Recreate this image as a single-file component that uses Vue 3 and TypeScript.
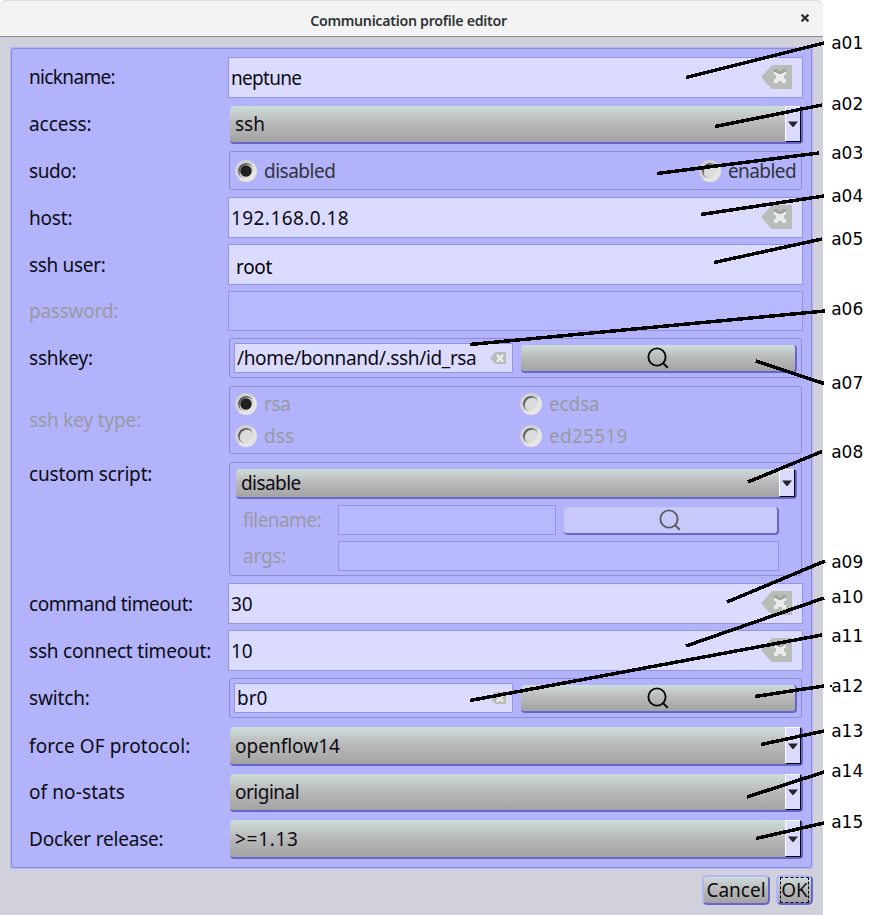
<script setup lang="ts">
interface Callout {
  label: string
  x1: number
  y1: number
  x2: number
  y2: number
  ty: number
}

interface Row {
  label: string
  kind: 'text' | 'combo' | 'sudo' | 'browse' | 'keytype' | 'script'
  value?: string
  cls?: string
  clear?: boolean
  disabled?: boolean
}

const rows: Row[] = [
  { label: 'nickname:', kind: 'text', value: 'neptune', cls: 'nickname', clear: true },
  { label: 'access:', kind: 'combo', value: 'ssh', cls: 'access' },
  { label: 'sudo:', kind: 'sudo', cls: 'sudo' },
  { label: 'host:', kind: 'text', value: '192.168.0.18', cls: 'host', clear: true },
  { label: 'ssh user:', kind: 'text', value: 'root', cls: 'user' },
  { label: 'password:', kind: 'text', value: '', cls: 'password', disabled: true },
  { label: 'sshkey:', kind: 'browse', value: '/home/bonnand/.ssh/id_rsa', cls: 'sshkey' },
  { label: 'ssh key type:', kind: 'keytype', cls: 'keytype', disabled: true },
  { label: 'custom script:', kind: 'script', cls: 'script' },
  { label: 'command timeout:', kind: 'text', value: '30', cls: 'timeout', clear: true },
  { label: 'ssh connect timeout:', kind: 'text', value: '10', cls: 'connect', clear: true },
  { label: 'switch:', kind: 'browse', value: 'br0', cls: 'switch' },
  { label: 'force OF protocol:', kind: 'combo', value: 'openflow14', cls: 'protocol' },
  { label: 'of no-stats', kind: 'combo', value: 'original', cls: 'nostats' },
  { label: 'Docker release:', kind: 'combo', value: '>=1.13', cls: 'docker' },
]

const keyTypes = ['rsa', 'ecdsa', 'dss', 'ed25519']

const callouts: Callout[] = [
  { label: 'a01', x1: 686, y1: 77.5, x2: 824, y2: 43, ty: 49 },
  { label: 'a02', x1: 715, y1: 126.5, x2: 822, y2: 105, ty: 110 },
  { label: 'a03', x1: 657, y1: 173.5, x2: 819, y2: 153, ty: 159 },
  { label: 'a04', x1: 701, y1: 214.5, x2: 824, y2: 196, ty: 202 },
  { label: 'a05', x1: 714, y1: 262.5, x2: 822, y2: 239, ty: 245 },
  { label: 'a06', x1: 470, y1: 344.5, x2: 825, y2: 311, ty: 315 },
  { label: 'a07', x1: 756, y1: 361, x2: 824, y2: 383.5, ty: 389 },
  { label: 'a08', x1: 748, y1: 482, x2: 822, y2: 451.5, ty: 458 },
  { label: 'a09', x1: 727, y1: 602, x2: 825, y2: 561, ty: 568 },
  { label: 'a10', x1: 686, y1: 646, x2: 824, y2: 598, ty: 603 },
  { label: 'a11', x1: 470, y1: 700.5, x2: 822, y2: 635, ty: 642 },
  { label: 'a12', x1: 755, y1: 696.5, x2: 824, y2: 686, ty: 692 },
  { label: 'a13', x1: 761, y1: 744.5, x2: 824, y2: 731, ty: 737 },
  { label: 'a14', x1: 747, y1: 797, x2: 824, y2: 772, ty: 777 },
  { label: 'a15', x1: 756, y1: 838.5, x2: 824, y2: 823, ty: 828 },
]

// Letter spacing, in pixels, that sets each caption at its own width.
const tracking: Record<string, number> = {
  'nickname:': -0.65,
  'access:': -0.05,
  'sudo:': -0.4,
  'host:': -0.2,
  'ssh user:': -0.33,
  'password:': -0.25,
  'sshkey:': -0.2,
  'ssh key type:': -0.15,
  'custom script:': -0.17,
  'command timeout:': -0.43,
  'ssh connect timeout:': -0.2,
  'switch:': -0.15,
  'force OF protocol:': 0.1,
  'of no-stats': 0.1,
  'Docker release:': -0.2,
  neptune: -0.7,
  disabled: -0.5,
  enabled: -0.57,
  '192.168.0.18': 0.42,
  root: -0.3,
  '/home/bonnand/.ssh/id_rsa': -0.36,
  disable: -0.57,
  'filename:': -0.57,
  'args:': -0.2,
  original: -0.5,
  '>=1.13': 0.7,
  ed25519: 0.28,
  ecdsa: -0.2,
  rsa: -0.4,
}

const track = (text = '') => ({ letterSpacing: `${tracking[text] ?? 0}px` })
</script>

<template>
  <div class="page">
    <div class="window">
      <header class="titlebar">
        <span class="title">Communication profile editor</span>
        <svg class="close" viewBox="0 0 10 10"><path d="M1.6 1.6 8.4 8.4M8.4 1.6 1.6 8.4" /></svg>
      </header>

      <main class="panel">
        <div class="frame">
          <div v-for="row in rows" :key="row.label" class="row" :class="row.cls">
            <label class="label" :class="{ dim: row.disabled }" :style="track(row.label)">{{ row.label }}</label>

            <div v-if="row.kind === 'text'" class="field" :class="{ off: row.disabled }">
              <span class="value" :style="track(row.value)">{{ row.value }}</span>
              <svg v-if="row.clear" class="clear" viewBox="0 0 32 24">
                <path class="tag" d="M1 12 12 0H32V24H12L6 18Z" />
                <path class="cross" d="M14 6h12v4h-2v4h2v4h-4v-2h-4v2h-4v-4h2v-4h-2z" />
                <path class="shade" d="M14 4h4v2h4V4h4v3h-2v1h-2v1h-4V8h-2V7h-2z" />
              </svg>
            </div>

            <div v-else-if="row.kind === 'combo'" class="combo">
              <span class="value" :style="track(row.value)">{{ row.value }}</span>
              <span class="drop"><svg viewBox="0 0 10 6"><path d="M0 .500H10L5.500 6h-1z" /></svg></span>
            </div>

            <div v-else-if="row.kind === 'sudo'" class="group choices">
              <span class="option"><i class="radio on"></i><span :style="track('disabled')">disabled</span></span>
              <span class="option"><i class="radio"></i><span :style="track('enabled')">enabled</span></span>
            </div>

            <div v-else-if="row.kind === 'browse'" class="group browse">
              <div class="field small">
                <span class="value" :style="track(row.value)">{{ row.value }}</span>
                <svg class="clear" viewBox="0 0 32 24">
                  <path class="tag" d="M0 12 11 0H32V24H11Z" />
                  <path class="cross" d="M13 5h4l3 4 3-4h4v4l-4 3.500 4 3.500v4h-4l-3-4-3 4h-4v-4l4-3.500-4-3.500z" />
                </svg>
              </div>
              <button class="search">
                <svg viewBox="0 0 22 22"><circle cx="10" cy="10" r="8.600" /><path d="M15.600 15.800 20.800 20.800" /></svg>
              </button>
            </div>

            <div v-else-if="row.kind === 'keytype'" class="group keys">
              <span v-for="(type, i) in keyTypes" :key="type" class="option dim">
                <i class="radio" :class="{ on: i === 0 }"></i><span :style="track(type)">{{ type }}</span>
              </span>
            </div>

            <div v-else class="group custom">
              <div class="combo">
                <span class="value" :style="track('disable')">disable</span>
                <span class="drop"><svg viewBox="0 0 10 6"><path d="M0 .500H10L5.500 6h-1z" /></svg></span>
              </div>
              <div class="subrow">
                <span class="sublabel" :style="track('filename:')">filename:</span>
                <div class="field off"></div>
                <button class="search muted">
                  <svg viewBox="0 0 22 22"><circle cx="10" cy="10" r="8.600" /><path d="M15.600 15.800 20.800 20.800" /></svg>
                </button>
              </div>
              <div class="subrow">
                <span class="sublabel" :style="track('args:')">args:</span>
                <div class="field off wide"></div>
              </div>
            </div>
          </div>
        </div>
      </main>

      <footer class="actions">
        <button class="action cancel"><span>Cancel</span></button>
        <button class="action ok"><span>OK</span></button>
      </footer>
    </div>

    <svg class="callouts" viewBox="0 0 869 915">
      <g v-for="c in callouts" :key="c.label">
        <line :x1="c.x1" :y1="c.y1" :x2="c.x2" :y2="c.y2" />
        <text x="831.200" :y="c.ty">{{ c.label }}</text>
      </g>
      <rect x="830" y="685" width="2" height="2" />
    </svg>
  </div>
</template>

<style>
body {
  background: #fff;
}
</style>

<style scoped>
.page {
  position: relative;
  width: 869px;
  height: 915px;
  overflow: hidden;
  background: #fff;
  font-family: 'Noto Sans', sans-serif;
  font-size: 19px;
  color: #0c0c14;
}

.page * {
  box-sizing: border-box;
}

.window {
  display: flex;
  flex-direction: column;
  width: 823px;
  height: 915px;
  background: #d1d1dc;
  border-radius: 7px 7px 0 0;
}

.titlebar {
  display: grid;
  grid-template-columns: 1fr auto 1fr;
  align-items: center;
  height: 37px;
  padding: 3px 13px 0 7px;
  background: #f3f3f3;
  border-top: 1px solid #dcdcdc;
  border-bottom: 1px solid #8e8e8e;
  border-radius: 7px 7px 0 0;
}

.title {
  grid-column: 2;
  font-size: 14.200px;
  letter-spacing: -0.280px;
  line-height: 20px;
  padding-top: 1px;
  font-weight: 600;
  color: #2e3436;
  white-space: nowrap;
}

.close {
  justify-self: end;
  width: 10px;
  height: 10px;
  margin-top: -4px;
  stroke: #2e3436;
  stroke-width: 2.200;
}

.panel {
  width: 803px;
  height: 822px;
  margin: 10px 0 0 10px;
  padding: 1px;
  background: #b3b3ff;
}

.frame {
  width: 801px;
  height: 820px;
  padding: 8px 0 0 17px;
  background: #b2b3fa;
  border: 1px solid #8d8dd0;
  border-radius: 3px;
}

.row {
  display: grid;
  grid-template-columns: 199px 575px;
  align-items: center;
}

.nickname, .host, .user, .timeout, .connect { height: 41px; }
.access { height: 38px; margin-top: 8px; }
.sudo { height: 39px; margin-top: 7px; }
.host { margin-top: 7px; }
.user { margin-top: 6px; }
.password { height: 40px; margin-top: 6px; }
.sshkey { height: 40px; margin-top: 7px; }
.keytype { height: 68px; margin-top: 8px; }
.script { height: 114px; margin-top: 8px; }
.timeout { margin-top: 7px; }
.connect { margin-top: 6px; }
.switch { height: 40px; margin-top: 7px; }
.protocol { height: 39px; margin-top: 9px; }
.nostats { height: 38px; margin-top: 8px; }
.docker { height: 39px; margin-top: 8px; }

.label {
  line-height: 26px;
  white-space: nowrap;
}

.script > .label {
  align-self: start;
}

.nickname > .label,
.script > .label,
.protocol > .label,
.docker > .label {
  margin-top: -1px;
}

.access > .label,
.nostats > .label {
  margin-top: -2px;
}

.dim,
.sublabel {
  color: #9999a3;
}

.field {
  display: flex;
  align-items: center;
  justify-content: space-between;
  height: 100%;
  padding: 0 10px 0 2px;
  background: #dbdbff;
  border: 1px solid #9595df;
  line-height: 26px;
  white-space: nowrap;
}

.field.off {
  background: #b8b8ff;
}

.user .field {
  padding: 4px 0 0 7px;
  color: #000;
}

.clear {
  flex: none;
  width: 32px;
  height: 24px;
  margin-bottom: 1px;
}

.tag { fill: #b9bdb8; }
.shade { fill: #a2a69f; }
.cross { fill: #ebebeb; }

.combo {
  display: flex;
  align-items: center;
  justify-content: space-between;
  height: 100%;
  margin-left: 2px;
  width: 573px;
  padding-left: 5px;
  background: linear-gradient(#ceddda, #b9b9b9 48%, #a3a3a3);
  border-right: 2px solid #6666cc;
  border-bottom: 2px solid #6666cc;
  border-radius: 4px;
  line-height: 26px;
}

.drop {
  display: flex;
  align-items: center;
  justify-content: center;
  align-self: stretch;
  width: 16px;
  background: #dbdbff;
  border: 1px solid #fff;
  border-right-color: #000;
  border-bottom-color: #000;
}

.drop svg {
  width: 10px;
  height: 6px;
  fill: #25252b;
}

.group {
  width: 573px;
  height: 100%;
  margin-left: 1px;
  border: 1px solid #8d8dd0;
  border-radius: 3px;
}

.choices {
  display: flex;
  align-items: center;
  justify-content: space-between;
  padding: 0 5px;
  color: #33333c;
}

.option {
  display: flex;
  align-items: center;
  gap: 7px;
  line-height: 26px;
}

.radio {
  display: block;
  width: 22px;
  height: 22px;
  border: 3px solid;
  border-color: #d2d2d4 #e6e6e2 #e6e6e2 #d2d2d4;
  border-radius: 50%;
  background: #dcdcdc;
  box-shadow: inset 1.500px 1.500px 1px 0 #505050, inset -1px -1px 1px #f4f4f4, inset 0 0 0 1px #a8a8a8;
}

.radio.on {
  background: radial-gradient(circle, #202020 5.200px, #dcdcdc 6.200px);
}

.browse {
  display: flex;
  align-items: center;
  padding: 0 4px;
}

.browse .field {
  width: 279px;
  height: 30px;
  padding-right: 6px;
}

.browse .clear {
  width: 16px;
  height: 12px;
  margin-bottom: 1px;
}

.search {
  display: flex;
  align-items: center;
  justify-content: center;
  width: 276px;
  height: 28px;
  margin: 1px 0 0 8px;
  padding: 0 1px 0 0;
  background: linear-gradient(#ceddda, #b9b9b9 48%, #a3a3a3);
  border: 0 solid #6666cc;
  border-width: 0 2px 2px 0;
  border-radius: 4px;
}

.search svg {
  flex: none;
  width: 22px;
  height: 22px;
  fill: none;
  stroke: #0a0a0a;
  stroke-width: 1.900;
}

.search.muted {
  width: 215px;
  padding-right: 2px;
  background: #c8c8fa;
}

.search.muted svg {
  stroke: #5c5c60;
}

.keys {
  display: grid;
  grid-template-columns: 285px auto;
  grid-auto-rows: 32px;
  padding: 1px 5px;
}

.custom {
  padding: 6px 0 0 6px;
}

.custom > .combo {
  width: 561px;
  height: 30px;
  margin: 0;
}

.subrow {
  display: flex;
  align-items: center;
  height: 30px;
  margin-top: 6px;
  padding-left: 7px;
}

.sublabel {
  width: 95px;
}

.subrow .field {
  width: 218px;
}

.subrow .wide {
  width: 441px;
}

.actions {
  display: flex;
  gap: 6px;
  justify-content: flex-end;
  padding: 6px 10px 0 0;
}

.action {
  display: flex;
  align-items: center;
  justify-content: center;
  width: 68px;
  height: 30px;
  padding: 0;
  background: linear-gradient(#ceddda, #b9b9b9 48%, #a3a3a3);
  border: 2px solid;
  border-color: #b3b3ff #6666cc #6666cc #b3b3ff;
  border-radius: 5px;
  color: #0c0c14;
  font: 19px 'Noto Sans', sans-serif;
}

.ok {
  width: 37px;
}

.ok span {
  display: flex;
  align-items: center;
  justify-content: center;
  width: 29px;
  height: 26px;
  border: 1px dashed #000;
}

.callouts {
  position: absolute;
  inset: 0;
  width: 869px;
  height: 915px;
  fill: #000;
  stroke: none;
}

.callouts line {
  stroke: #000;
  stroke-width: 3.500;
  shape-rendering: crispEdges;
}

.callouts text {
  font: 17px 'DejaVu Sans', sans-serif;
}
</style>
